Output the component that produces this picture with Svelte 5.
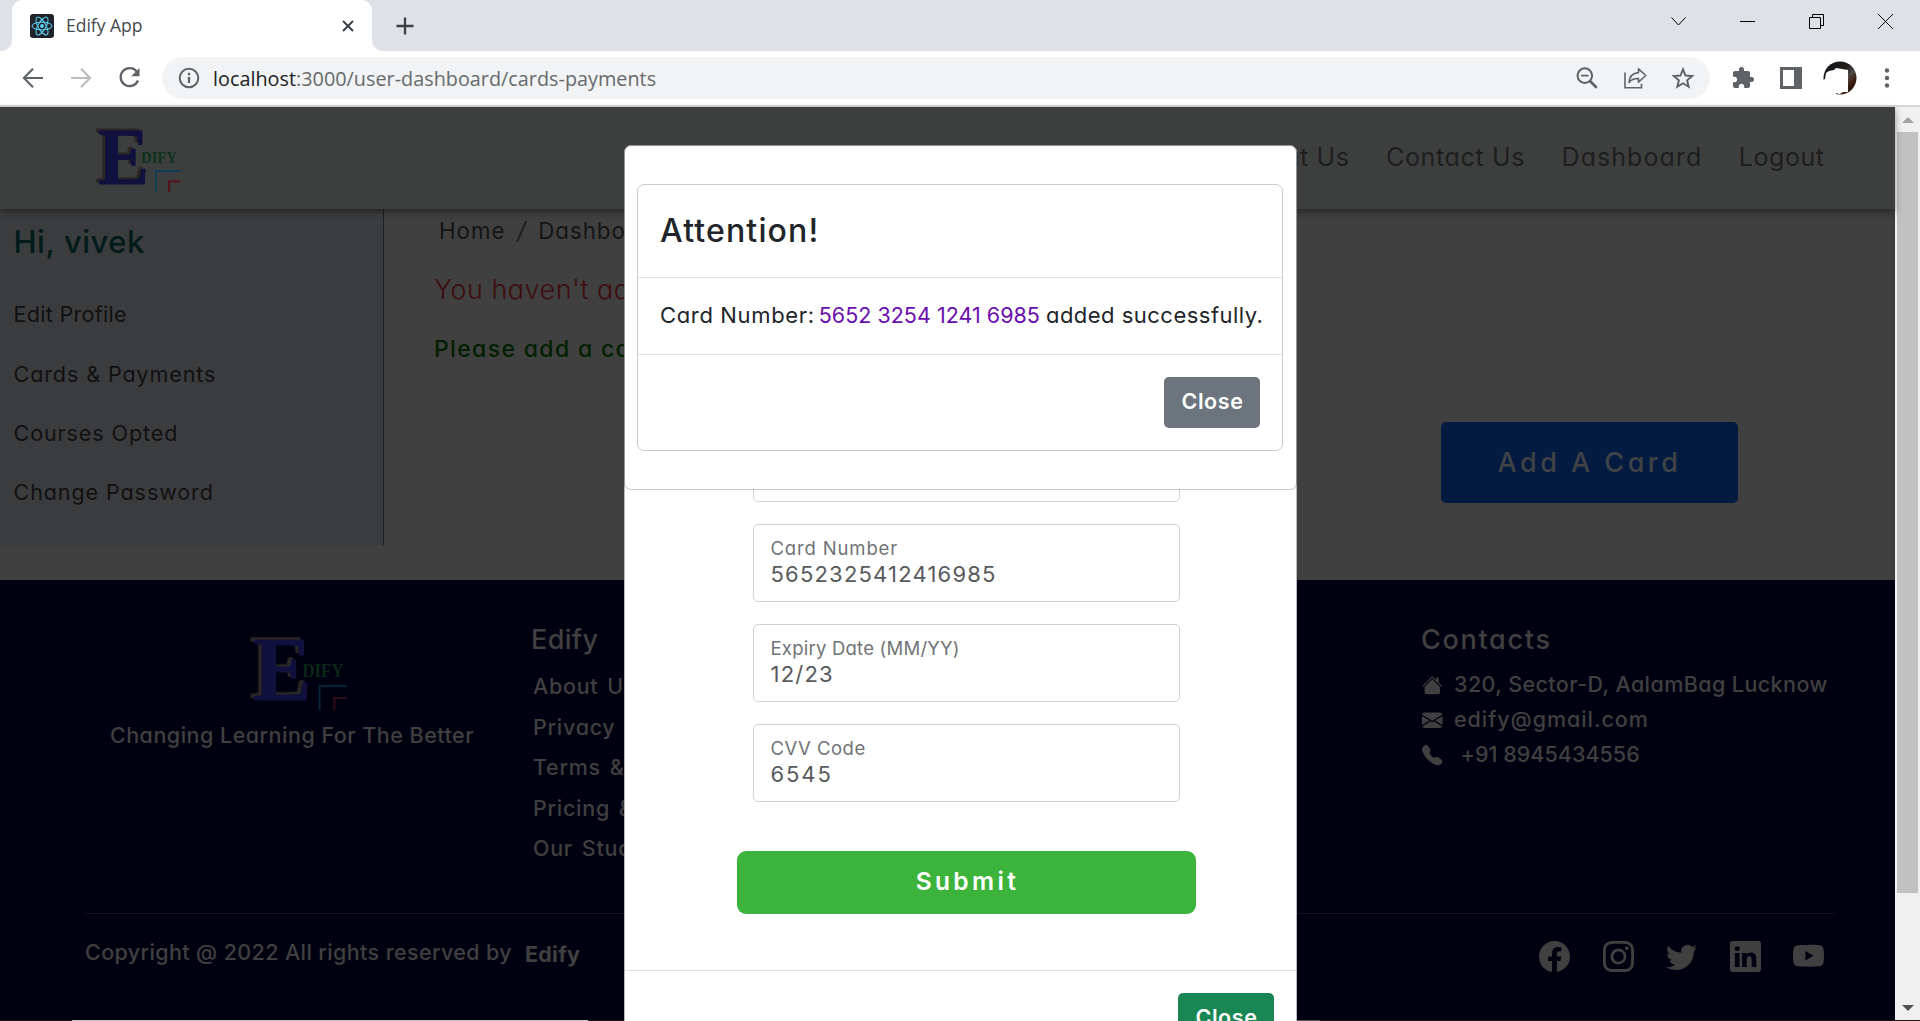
<script>
  const sideLinks = ['Edit Profile', 'Cards & Payments', 'Courses Opted', 'Change Password'];
  const footLinks = ['About Us', 'Privacy Policy', 'Terms & Conditions', 'Pricing & Refund', 'Our Students'];
  const fields = [
    { label: 'Card Number', value: '5652325412416985', cls: 'num' },
    { label: 'Expiry Date (MM/YY)', value: '12/23', cls: 'exp' },
    { label: 'CVV Code', value: '6545', cls: 'cvv' }
  ];
  const social = [
    'M16 8.049c0-4.446-3.582-8.05-8-8.05C3.58 0-.002 3.603-.002 8.05c0 4.017 2.926 7.347 6.75 7.951v-5.625h-2.03V8.05H6.75V6.275c0-2.017 1.195-3.131 3.022-3.131.876 0 1.791.157 1.791.157v1.98h-1.009c-.993 0-1.303.621-1.303 1.258v1.51h2.218l-.354 2.326H9.25V16c3.824-.604 6.75-3.934 6.75-7.951z',
    'M8 0C5.829 0 5.556.01 4.703.048 3.85.088 3.269.222 2.76.42a3.917 3.917 0 0 0-1.417.923A3.927 3.927 0 0 0 .42 2.76C.222 3.268.087 3.85.048 4.7.01 5.555 0 5.827 0 8.001c0 2.172.01 2.444.048 3.297.04.852.174 1.433.372 1.942.205.526.478.972.923 1.417.444.445.89.719 1.416.923.51.198 1.09.333 1.942.372C5.555 15.99 5.827 16 8 16s2.444-.01 3.298-.048c.851-.04 1.434-.174 1.943-.372a3.916 3.916 0 0 0 1.416-.923c.445-.445.718-.891.923-1.417.197-.509.332-1.09.372-1.942C15.99 10.445 16 10.173 16 8s-.01-2.445-.048-3.299c-.04-.851-.175-1.433-.372-1.941a3.926 3.926 0 0 0-.923-1.417A3.911 3.911 0 0 0 13.24.42c-.51-.198-1.092-.333-1.943-.372C10.443.01 10.172 0 7.998 0h.003zm-.717 1.442h.718c2.136 0 2.389.007 3.232.046.78.035 1.204.166 1.486.275.373.145.64.319.92.599.28.28.453.546.598.92.11.281.24.705.275 1.485.039.843.047 1.096.047 3.231s-.008 2.389-.047 3.232c-.035.78-.166 1.203-.275 1.485a2.47 2.47 0 0 1-.599.919c-.28.28-.546.453-.92.598-.28.11-.704.24-1.485.276-.843.038-1.096.047-3.232.047s-2.39-.009-3.233-.047c-.78-.036-1.203-.166-1.485-.276a2.478 2.478 0 0 1-.92-.598 2.48 2.48 0 0 1-.6-.92c-.109-.281-.24-.705-.275-1.485-.038-.843-.046-1.096-.046-3.233 0-2.136.008-2.388.046-3.231.036-.78.166-1.204.276-1.486.145-.373.319-.64.599-.92.28-.28.546-.453.92-.598.282-.11.705-.24 1.485-.276.738-.034 1.024-.044 2.515-.045v.002zm4.988 1.328a.96.96 0 1 0 0 1.92.96.96 0 0 0 0-1.92zm-4.27 1.122a4.109 4.109 0 1 0 0 8.217 4.109 4.109 0 0 0 0-8.217zm0 1.441a2.667 2.667 0 1 1 0 5.334 2.667 2.667 0 0 1 0-5.334z',
    'M5.026 15c6.038 0 9.341-5.003 9.341-9.334 0-.14 0-.282-.006-.422A6.685 6.685 0 0 0 16 3.542a6.658 6.658 0 0 1-1.889.518 3.301 3.301 0 0 0 1.447-1.817 6.533 6.533 0 0 1-2.087.793A3.286 3.286 0 0 0 7.875 6.03a9.325 9.325 0 0 1-6.767-3.429 3.289 3.289 0 0 0 1.018 4.382A3.323 3.323 0 0 1 .64 6.575v.045a3.288 3.288 0 0 0 2.632 3.218 3.203 3.203 0 0 1-.865.115 3.23 3.23 0 0 1-.614-.057 3.283 3.283 0 0 0 3.067 2.277A6.588 6.588 0 0 1 .78 13.58a6.32 6.32 0 0 1-.78-.045A9.344 9.344 0 0 0 5.026 15z',
    'M0 1.146C0 .513.526 0 1.175 0h13.65C15.474 0 16 .513 16 1.146v13.708c0 .633-.526 1.146-1.175 1.146H1.175C.526 16 0 15.487 0 14.854V1.146zm4.943 12.248V6.169H2.542v7.225h2.401zm-1.2-8.212c.837 0 1.358-.554 1.358-1.248-.015-.709-.52-1.248-1.342-1.248-.822 0-1.359.54-1.359 1.248 0 .694.521 1.248 1.327 1.248h.016zm4.908 8.212V9.359c0-.216.016-.432.08-.586.173-.431.568-.878 1.232-.878.869 0 1.216.662 1.216 1.634v3.865h2.401V9.25c0-2.22-1.184-3.252-2.764-3.252-1.274 0-1.845.7-2.165 1.193v.025h-.016a5.54 5.54 0 0 1 .016-.025V6.169h-2.4c.03.678 0 7.225 0 7.225h2.4z',
    'M8.051 1.999h.089c.822.003 4.987.033 6.11.335a2.01 2.01 0 0 1 1.415 1.42c.101.38.172.883.22 1.402l.01.104.022.26.008.104c.065.914.073 1.77.074 1.957v.075c-.001.194-.01 1.108-.082 2.06l-.008.105-.009.104c-.05.572-.124 1.14-.235 1.558a2.007 2.007 0 0 1-1.415 1.42c-1.16.312-5.569.334-6.18.335h-.142c-.309 0-1.587-.006-2.927-.052l-.17-.006-.087-.004-.171-.007-.171-.007c-1.11-.049-2.167-.128-2.654-.26a2.007 2.007 0 0 1-1.415-1.419c-.111-.417-.185-.986-.235-1.558L.09 9.82l-.008-.104A31.4 31.4 0 0 1 0 7.68v-.123c.002-.215.01-.958.064-1.778l.007-.103.003-.052.008-.104.022-.26.01-.104c.048-.519.119-1.023.22-1.402a2.007 2.007 0 0 1 1.415-1.42c.487-.13 1.544-.21 2.654-.26l.17-.007.172-.006.086-.003.171-.007A99.788 99.788 0 0 1 7.858 2h.193zM6.4 5.209v4.818l4.157-2.408L6.4 5.209z'
  ];
  const contacts = [
    { text: '320, Sector-D, AalamBag Lucknow', cls: 'addr', d: 'm8 3.293 6 6V13.5a1.5 1.5 0 0 1-1.5 1.5h-9A1.5 1.5 0 0 1 2 13.5V9.293l6-6zm5-.793V6l-2-2V2.5a.5.5 0 0 1 .5-.5h1a.5.5 0 0 1 .5.5zM7.293 1.5a1 1 0 0 1 1.414 0l6.647 6.646a.5.5 0 0 1-.708.708L8 2.207 1.354 8.854a.5.5 0 1 1-.708-.708L7.293 1.5z' },
    { text: 'edify@gmail.com', cls: 'mail', d: 'M.05 3.555A2 2 0 0 1 2 2h12a2 2 0 0 1 1.95 1.555L8 8.414.05 3.555zM0 4.697v7.104l5.803-3.558L0 4.697zM6.761 8.83l-6.57 4.027A2 2 0 0 0 2 14h12a2 2 0 0 0 1.808-1.144l-6.57-4.027L8 9.586l-1.239-.757zm3.436-.586L16 11.801V4.697l-5.803 3.546z' },
    { text: '+91 8945434556', cls: 'phone', d: 'M1.885.511a1.745 1.745 0 0 1 2.61.163L6.29 2.98c.329.423.445.974.315 1.494l-.547 2.19a.678.678 0 0 0 .178.643l2.457 2.457a.678.678 0 0 0 .644.178l2.189-.547a1.745 1.745 0 0 1 1.494.315l2.306 1.794c.829.645.905 1.87.163 2.611l-1.034 1.034c-.74.74-1.846 1.065-2.877.702a18.634 18.634 0 0 1-7.01-4.42 18.634 18.634 0 0 1-4.42-7.009c-.362-1.03-.037-2.137.703-2.877L1.885.511z' }
  ];
</script>

{#snippet logo()}
  <svg class="logo" viewBox="0 0 84 63" aria-label="Edify">
    <text x="2" y="54.5" class="big" textLength="51" lengthAdjust="spacingAndGlyphs">E</text>
    <text x="45" y="33.7" class="small" textLength="36" lengthAdjust="spacingAndGlyphs">DIFY</text>
    <path class="corner" d="M60 63V42H84" fill="none" stroke="#0f3f57" stroke-width="1.8" />
    <path class="corner" d="M73 63V52.5H84" fill="none" stroke="#551419" stroke-width="1.9" />
  </svg>
{/snippet}

<div class="window">
  <div class="tabstrip">
    <div class="tab">
      <svg width="24" height="24" viewBox="0 0 24 24"><rect width="24" height="24" rx="3" fill="#20232a" /><g fill="none" stroke="#61dafb" stroke-width="1"><ellipse cx="12" cy="12" rx="10" ry="3.9" /><ellipse cx="12" cy="12" rx="10" ry="3.9" transform="rotate(60 12 12)" /><ellipse cx="12" cy="12" rx="10" ry="3.9" transform="rotate(120 12 12)" /></g><circle cx="12" cy="12" r="1.9" fill="#61dafb" /></svg>
      <span class="tabname">Edify App</span>
      <svg class="x" width="12" height="12" viewBox="0 0 12 12"><path d="M1 1l10 10M11 1L1 11" stroke="#3c4043" stroke-width="2" /></svg>
    </div>
    <svg class="plus" width="18" height="18" viewBox="0 0 18 18"><path d="M9 0.5v17M0.5 9h17" stroke="#3c4043" stroke-width="2.3" /></svg>
    <div class="controls">
      <svg width="15" height="15" viewBox="0 0 15 15"><path d="M.5 3.5l7 7.5 7-7.5" /></svg>
      <svg width="15" height="15" viewBox="0 0 15 15"><path d="M0 7.5h15" /></svg>
      <svg width="15" height="15" viewBox="0 0 15 15"><path d="M.5 3.5h11v11H.5zM3.5 3V.5h11v11H12" /></svg>
      <svg width="15" height="15" viewBox="0 0 15 15"><path d="M0 0l15 15M15 0L0 15" /></svg>
    </div>
  </div>

  <div class="toolbar">
    <svg viewBox="0 0 24 24"><path d="M22 12H3M12 2.8L2.9 12l9.1 9.2" fill="none" stroke="#5f6368" stroke-width="2.1" /></svg>
    <svg viewBox="0 0 24 24"><path d="M2 12h19M12 2.8l9.1 9.2-9.1 9.2" fill="none" stroke="#babcbe" stroke-width="2.1" /></svg>
    <svg viewBox="0 0 24 24"><path d="M19.8 5.6A9 9 0 1 0 21 14.5" fill="none" stroke="#5f6368" stroke-width="2.3" /><path d="M22.5 2v8.3h-8.3z" fill="#5f6368" /></svg>
    <div class="omnibox">
      <svg viewBox="0 0 24 24"><circle cx="12" cy="12" r="9.3" fill="none" stroke="#5f6368" stroke-width="2" /><path d="M12 11v6M12 6.8v2.4" stroke="#5f6368" stroke-width="2.3" /></svg>
      <span class="url"><b>localhost</b>:3000/user-dashboard/cards-payments</span>
      <svg viewBox="0 0 24 24"><g fill="none" stroke="#5f6368"><circle cx="9.8" cy="9.6" r="7.3" stroke-width="2" /><path d="M15 15l6.7 6.8" stroke-width="2.7" /><path d="M6 9.6h7.6" stroke-width="1.7" /></g></svg>
      <svg viewBox="0 0 24 24"><g fill="none" stroke="#5f6368" stroke-width="1.6"><path d="M2 6.5v15.3h16.5v-4" /><path d="M6 16.5C6.5 10.5 9.5 7 15.5 6.6V2.8l7.3 6.7-7.3 6.6v-3.6c-4.3-.2-7 .8-9.5 4z" stroke-linejoin="round" /></g></svg>
      <svg viewBox="0 0 24 24"><path d="M12 3.3l2.5 6.2 6.7.5-5.1 4.3 1.6 6.5-5.7-3.5-5.7 3.5 1.6-6.5-5.1-4.3 6.7-.5z" fill="none" stroke="#5f6368" stroke-width="1.9" /></svg>
    </div>
    <svg class="puzzle" viewBox="0 0 24 24"><path d="M20.5 11H19V7c0-1.1-.9-2-2-2h-4V3.5a2.5 2.5 0 0 0-5 0V5H4c-1.1 0-1.99.9-1.99 2v3.8H3.5c1.490 0 2.7 1.210 2.7 2.7s-1.210 2.7-2.7 2.7H2V20c0 1.1.9 2 2 2h3.8v-1.5c0-1.490 1.210-2.7 2.7-2.7 1.490 0 2.7 1.210 2.7 2.7V22H17c1.1 0 2-.9 2-2v-4h1.5a2.5 2.5 0 0 0 0-5z" fill="#5f6368" /></svg>
    <svg class="panel" viewBox="0 0 24 24"><path d="M1 1h22v22H1z" fill="#5f6368" /><path d="M4 4h11v16H4z" fill="#fff" /></svg>
    <svg class="avatar" viewBox="0 0 34 34"><defs><linearGradient id="av" x1="0" y1="0" x2="1" y2="1"><stop offset="0" stop-color="#0c1626" /><stop offset=".42" stop-color="#241a18" /><stop offset=".6" stop-color="#4e4a4c" /><stop offset=".75" stop-color="#3d1c0c" /><stop offset="1" stop-color="#0c0a06" /></linearGradient></defs><circle cx="17" cy="17" r="16.5" fill="url(#av)" /><path d="M0 19l2-1 1-6 3-2 5-1 2-2 6 1 6 1v22h-5l-3 2h-1l-3-1v4H0z" fill="#fff" /></svg>
    <svg class="dots" viewBox="0 0 24 24" fill="#5f6368"><circle cx="12" cy="4.5" r="2.2" /><circle cx="12" cy="12" r="2.2" /><circle cx="12" cy="19.5" r="2.2" /></svg>
  </div>

  <div class="view">
    <div class="page">
      <header>
        {@render logo()}
        <nav><span class="c">About Us</span><span class="c">Contact Us</span><span class="d">Dashboard</span><span class="l">Logout</span></nav>
      </header>
      <main>
        <aside>
          <h2>Hi, vivek</h2>
          {#each sideLinks as s, i}<div class="side" class:tight={i === 0}>{s}</div>{/each}
        </aside>
        <section>
          <div class="crumb"><span>Home</span><i>/</i><span>Dashboard</span></div>
          <div class="none">You haven't added any card yet</div>
          <div class="please">Please add a card</div>
          <div class="add">Add A Card</div>
        </section>
      </main>
      <footer>
        <div class="cols">
          <div class="brand">{@render logo()}<p>Changing Learning For The Better</p></div>
          <div><h3>Edify</h3><div class="links">{#each footLinks as f}<div>{f}</div>{/each}</div></div>
          <div>
            <h3 class="ct">Contacts</h3>
            <div class="contacts">
              {#each contacts as c}<div class={c.cls}><svg viewBox="0 0 16 16"><path d={c.d} /></svg><span>{c.text}</span></div>{/each}
            </div>
          </div>
        </div>
        <div class="bar">
          <span>Copyright @ 2022 All rights reserved by</span><b>Edify</b>
          <div class="social">{#each social as d}<svg viewBox="0 0 16 16"><path {d} /></svg>{/each}</div>
        </div>
      </footer>
    </div>
    <div class="scroll"><i class="up"></i><div class="thumb"></div><i class="down"></i></div>
  </div>

  <div class="modal back">
    <div class="form">
      <div class="field"></div>
      {#each fields as f}
        <div class="field"><label class={f.cls} for={f.cls}>{f.label}</label><div class="val {f.cls}" id={f.cls}>{f.value}</div></div>
      {/each}
      <div class="submit">Submit</div>
    </div>
    <div class="mfoot"><div class="btn green">Close</div></div>
  </div>

  <div class="modal front">
    <div class="alert">
      <div class="ahead">Attention!</div>
      <div class="abody"><span class="a1">Card Number:</span><span class="a2">5652 3254 1241 6985</span><span class="a3">added successfully.</span></div>
      <div class="afoot"><div class="btn">Close</div></div>
    </div>
  </div>
  <div class="edge"></div>
</div>

<style>
  :global(body) { margin: 0; overflow: hidden; }
  .window { position: relative; width: 1920px; height: 1021px; overflow: hidden; display: flex; flex-direction: column; font-family: Inter, sans-serif; font-feature-settings: 'cv11'; white-space: nowrap; }
  .window * { box-sizing: border-box; }
  svg { flex: none; display: block; }

  .tabstrip { height: 51px; background: #dee1e6; display: flex; align-items: center; padding-left: 12px; }
  .tab { position: relative; width: 360px; height: 51px; background: #fff; border-radius: 11px 11px 0 0; display: flex; align-items: center; padding: 0 18px; }
  .tab::before, .tab::after { content: ''; position: absolute; bottom: 0; width: 10px; height: 10px; }
  .tab::before { left: -10px; background: radial-gradient(circle at 0 0, transparent 9.5px, #fff 10px); }
  .tab::after { right: -10px; background: radial-gradient(circle at 100% 0, transparent 9.5px, #fff 10px); }
  .tabname { margin: -1px 0 0 12px; font: 17.5px/24px 'Open Sans', sans-serif; color: #45494d; flex: 1; }
  .plus { margin-left: 24px; }
  .controls { margin-left: auto; display: flex; align-self: flex-start; }
  .controls svg { width: 69px; height: 15px; margin-top: 14px; fill: none; stroke: #000; stroke-width: 1; }

  .toolbar { height: 56px; background: #fff; border-bottom: 2px solid #d6d7d8; display: flex; align-items: center; padding: 0 21px; }
  .toolbar svg { width: 24px; height: 24px; margin-right: 24px; }
  .omnibox { width: 1548px; height: 42px; border-radius: 21px; background: #f1f3f4; display: flex; align-items: center; padding: 0 15px; margin: 0 21px 0 -3px; }
  .omnibox svg:first-child { margin-right: 12px; }
  .omnibox svg:last-child { margin-right: 0; }
  .url { flex: 1; font: 19.8px/28px 'Open Sans', sans-serif; letter-spacing: 0.02px; color: #666a6e; padding-top: 1px; }
  .url b { font-weight: 400; color: #202124; }
  .toolbar .panel { margin-right: 20px; }
  .toolbar .avatar { width: 34px; height: 34px; margin-right: 18px; }
  .toolbar .dots { margin: 0; }

  .view { height: 914px; display: flex; }
  .page { width: 1895px; display: flex; flex-direction: column; background: #404040; }
  header { height: 102px; background: #3d3f3e; box-shadow: 0 3px 7px rgba(0, 0, 0, 0.4); display: flex; justify-content: space-between; padding: 0 70.5px 0 96px; z-index: 1; position: relative; }
  .logo { overflow: visible; width: 84px; height: 63px; margin-top: 22px; }
  .big { font: bold 80px 'Liberation Serif', serif; fill: #10113e; stroke: #10113e; stroke-width: 1; filter: drop-shadow(-3px -2px 0 #2a2725); }
  .small { font: bold 16px 'Liberation Serif', serif; fill: #0c3219; }
  nav { display: flex; gap: 36.5px; font-size: 25px; line-height: 40px; padding-top: 30px; color: #1d1e1e; }
  .c { letter-spacing: 0.65px; } .d { letter-spacing: 1.05px; } .l { letter-spacing: 0.55px; }
  main { height: 371px; display: flex; align-items: flex-start; }
  aside { width: 384px; height: 336px; background: #3b3c3e; border-right: 1px solid #1d1f21; padding-left: 13.5px; color: #111; }
  h2 { margin: 0 0 10.9px; font-size: 31px; line-height: 65.4px; font-weight: 500; letter-spacing: 0.54px; color: #001b1b; }
  .side { font-size: 21.5px; line-height: 59.2px; letter-spacing: 0.92px; }
  .tight { letter-spacing: 0.3px; }
  section { padding-left: 50px; display: flex; flex-direction: column; }
  .crumb { height: 44.8px; line-height: 44.8px; font-size: 22.3px; padding-left: 5px; letter-spacing: 1px; color: #141516; display: flex; gap: 11.5px; }
  .crumb i { color: #1c1e20; font-size: 24px; font-weight: 400; }
  .none { font-size: 27px; line-height: 71.2px; font-weight: 300; letter-spacing: 0.5px; color: #3f0d0d; }
  .please { font-size: 23px; line-height: 48.6px; font-weight: 500; letter-spacing: 1.35px; color: #002000; }
  .add { margin: 48.4px 0 0 1007px; width: 297px; height: 81px; border-radius: 5px; background: #031b40; color: #404346; font-size: 27px; font-weight: 500; line-height: 81px; letter-spacing: 3.5px; text-align: center; }

  footer { flex: 1; background: #000110; color: #404040; padding: 40px 60px 0 85px; font-size: 21.5px; font-weight: 500; }
  .cols { height: 293px; display: grid; grid-template-columns: 413px 858px 1fr; column-gap: 32px; }
  .brand { display: flex; flex-direction: column; align-items: center; }
  .brand .logo { width: 96px; height: 72px; margin: 17.5px 0 0 14px; }
  .brand .corner { opacity: 0.55; }
  .brand .small { opacity: 0.8; }
  .brand p { margin: 10px 0 0 1px; line-height: 30px; letter-spacing: 0.49px; }
  h3 { margin: 0 0 0 1px; font-size: 27px; line-height: 40.4px; font-weight: 500; letter-spacing: 0.36px; }
  .ct { letter-spacing: 1.7px; }
  .links { padding: 5.6px 0 0 3px; line-height: 40.6px; letter-spacing: 0.72px; word-spacing: 2.5px; }
  .contacts { padding: 6.6px 0 0 2px; line-height: 34.9px; }
  .contacts > div { display: flex; align-items: center; letter-spacing: 0.42px; }
  .contacts svg { width: 20.5px; height: 20.5px; fill: #404040; margin: 1px 11.5px 0 0; }
  .contacts .mail { letter-spacing: 0.95px; }
  .contacts .phone { letter-spacing: 0.03px; }
  .contacts .phone span { padding-left: 6.5px; }
  .bar { width: 1750px; border-top: 1px solid #101220; display: flex; padding-top: 23px; line-height: 30px; letter-spacing: 0.38px; }
  .bar b { margin: 2px 0 0 13px; letter-spacing: 0.2px; }
  .social { margin: 4px 11px 0 auto; display: flex; gap: 32.5px; }
  .social svg { width: 31px; height: 31px; fill: #404040; }

  .scroll { width: 25px; background: #f0f0f0; display: flex; flex-direction: column; align-items: center; }
  .scroll i { border: 6px solid transparent; }
  .scroll .up { border-bottom-color: #a3a3a3; border-top: 0; margin: 10px 0 9px; }
  .thumb { width: 21px; height: 761px; background: #c1c1c1; }
  .scroll .down { border-top-color: #505050; border-bottom: 0; margin-top: 112px; }

  .modal { position: absolute; z-index: 2; left: 624px; top: 145px; width: 673px; display: flex; flex-direction: column; background: #fff; }
  .back { height: 900px; border: 1px solid #b9b9bb; border-radius: 7px; }
  .form { height: 826px; padding-top: 278.2px; display: flex; flex-direction: column; align-items: center; gap: 22.5px; padding-left: 12px; }
  .field { width: 427px; height: 77.5px; flex: none; border: 1px solid #cfd2da; border-radius: 5px; padding: 9.8px 0 0 16.5px; display: flex; flex-direction: column; }
  label { font-size: 18.5px; line-height: 26px; letter-spacing: 0.85px; color: #717376; }
  label.exp { letter-spacing: 0.22px; } label.cvv { letter-spacing: 0.5px; }
  .val { font-size: 22px; line-height: 27.2px; letter-spacing: 1.2px; color: #58595b; }
  .val.cvv { letter-spacing: 1.9px; }
  .submit { width: 459px; height: 62.7px; flex: none; margin-top: 27px; border-radius: 9px; background: #3cb43c; color: #fff; font-size: 24.5px; font-weight: 600; line-height: 61px; letter-spacing: 3.4px; padding-left: 2px; text-align: center; }
  .mfoot { border-top: 1px solid #dee0e3; padding: 22px 22px 0 0; display: flex; justify-content: flex-end; }
  .btn { width: 96px; height: 51px; border-radius: 5px; background: #6c757d; color: #fff; font-size: 21.5px; font-weight: 600; line-height: 48px; letter-spacing: 0.6px; text-align: center; padding-left: 1px; }
  .green { background: #198754; }
  .front { height: 345px; border: 1px solid rgba(0, 0, 0, 0.2); background-clip: padding-box; border-radius: 7px; padding: 38px 13px 0 12px; }
  .alert { height: 267px; border: 1px solid #cacaca; border-radius: 7px; color: #212529; padding: 0 22px; }
  .ahead { margin: 0 -22px; padding-left: 22px; height: 93px; border-bottom: 1px solid #dee2e6; font-size: 32px; font-weight: 500; line-height: 92px; letter-spacing: 1.15px; }
  .abody { margin: 0 -22px; padding-left: 22px; height: 77px; border-bottom: 1px solid #dee2e6; font-size: 22px; line-height: 74px; display: flex; }
  .a1 { letter-spacing: 0.65px; } .a2 { font-size: 21.5px; letter-spacing: 0.02px; color: #6a0dad; margin: 0 6px 0 4px; } .a3 { letter-spacing: 0.48px; }
  .afoot { padding-top: 22px; display: flex; justify-content: flex-end; }
  .edge { position: absolute; left: 0; bottom: 0; width: 1920px; height: 1px; background: linear-gradient(90deg, #1a1616 72px, #c4c4c4 72px 588px, #1a1616 588px 1139px, #555 1139px 1320px, #1a1616 1320px); }
</style>
